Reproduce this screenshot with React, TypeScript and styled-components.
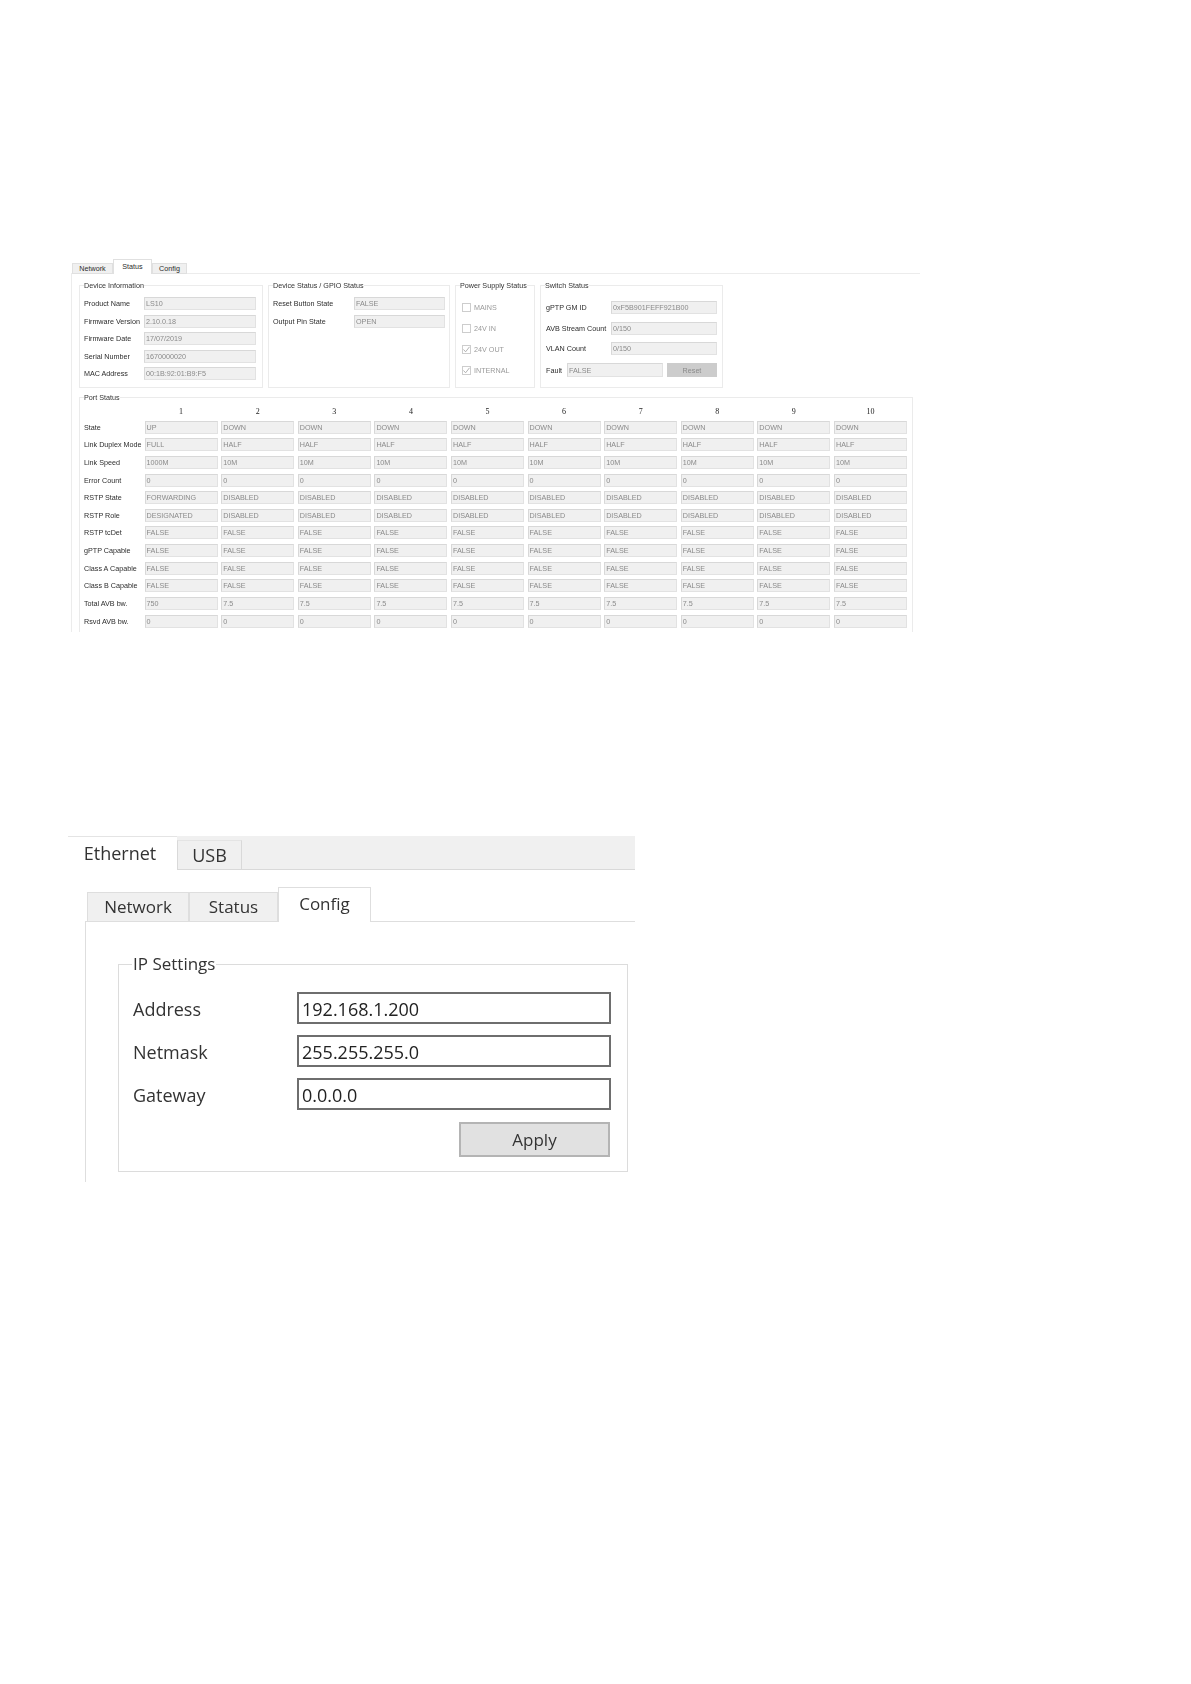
import styled, { createGlobalStyle } from "styled-components";

const GlobalStyle = createGlobalStyle`
  html, body {
    margin: 0;
    padding: 0;
    background: #ffffff;
  }
  #root {
    width: 1191px;
    height: 1684px;
    overflow: hidden;
  }
`;

const deviceInfo = [
  ["Product Name", "LS10"],
  ["Firmware Version", "2.10.0.18"],
  ["Firmware Date", "17/07/2019"],
  ["Serial Number", "1670000020"],
  ["MAC Address", "00:1B:92:01:B9:F5"],
];

const gpioStatus = [
  ["Reset Button State", "FALSE"],
  ["Output Pin State", "OPEN"],
];

const powerSupply = [
  { label: "MAINS", checked: false },
  { label: "24V IN", checked: false },
  { label: "24V OUT", checked: true },
  { label: "INTERNAL", checked: true },
];

const switchStatus = [
  ["gPTP GM ID", "0xF5B901FEFF921B00"],
  ["AVB Stream Count", "0/150"],
  ["VLAN Count", "0/150"],
];

const ports = [1, 2, 3, 4, 5, 6, 7, 8, 9, 10];

const portRows: { label: string; first: string; rest: string }[] = [
  { label: "State", first: "UP", rest: "DOWN" },
  { label: "Link Duplex Mode", first: "FULL", rest: "HALF" },
  { label: "Link Speed", first: "1000M", rest: "10M" },
  { label: "Error Count", first: "0", rest: "0" },
  { label: "RSTP State", first: "FORWARDING", rest: "DISABLED" },
  { label: "RSTP Role", first: "DESIGNATED", rest: "DISABLED" },
  { label: "RSTP tcDet", first: "FALSE", rest: "FALSE" },
  { label: "gPTP Capable", first: "FALSE", rest: "FALSE" },
  { label: "Class A Capable", first: "FALSE", rest: "FALSE" },
  { label: "Class B Capable", first: "FALSE", rest: "FALSE" },
  { label: "Total AVB bw.", first: "750", rest: "7.5" },
  { label: "Rsvd AVB bw.", first: "0", rest: "0" },
];

const ipSettings = [
  ["Address", "192.168.1.200"],
  ["Netmask", "255.255.255.0"],
  ["Gateway", "0.0.0.0"],
];

export default function App() {
  return (
    <Page>
      <GlobalStyle />
      <StatusWindow>
        <SmallTabs>
          <SmallTab $width={41}>Network</SmallTab>
          <SmallTab $width={39} $active>
            Status
          </SmallTab>
          <SmallTab $width={35}>Config</SmallTab>
        </SmallTabs>
        <StatusPane>
          <GroupRow>
            <SmallGroup $width={184}>
              <SmallLegend>Device Information</SmallLegend>
              <FieldGrid $label={60} $field={112}>
                {deviceInfo.map(([label, value]) => (
                  <FieldPair key={label} label={label} value={value} />
                ))}
              </FieldGrid>
            </SmallGroup>
            <SmallGroup $width={182}>
              <SmallLegend>Device Status / GPIO Status</SmallLegend>
              <FieldGrid $label={81} $field={91}>
                {gpioStatus.map(([label, value]) => (
                  <FieldPair key={label} label={label} value={value} />
                ))}
              </FieldGrid>
            </SmallGroup>
            <SmallGroup $width={80}>
              <SmallLegend>Power Supply Status</SmallLegend>
              <CheckList>
                {powerSupply.map((item) => (
                  <CheckRow key={item.label}>
                    <CheckBox>
                      {item.checked && (
                        <svg width="7" height="7" viewBox="0 0 7 7" fill="none">
                          <path d="M0.5 3.5 L2.6 5.8 L6.5 0.8" stroke="#a8a8a8" strokeWidth="0.9" />
                        </svg>
                      )}
                    </CheckBox>
                    <CheckLabel>{item.label}</CheckLabel>
                  </CheckRow>
                ))}
              </CheckList>
            </SmallGroup>
            <SmallGroup $width={183}>
              <SmallLegend>Switch Status</SmallLegend>
              <SwitchGrid>
                {switchStatus.map(([label, value]) => (
                  <FieldPair key={label} label={label} value={value} />
                ))}
              </SwitchGrid>
              <FaultRow>
                <SmallLabel>Fault</SmallLabel>
                <FaultField>FALSE</FaultField>
                <ResetButton>Reset</ResetButton>
              </FaultRow>
            </SmallGroup>
          </GroupRow>
          <PortGroup>
            <SmallLegend>Port Status</SmallLegend>
            <PortGrid>
              <span />
              {ports.map((port) => (
                <PortNumber key={port}>{port}</PortNumber>
              ))}
              {portRows.map((row) => (
                <PortRow key={row.label} label={row.label} first={row.first} rest={row.rest} />
              ))}
            </PortGrid>
          </PortGroup>
        </StatusPane>
      </StatusWindow>

      <ConfigWindow>
        <TopBar>
          <TopTab $active>Ethernet</TopTab>
          <TopTab>USB</TopTab>
        </TopBar>
        <ConfigBody>
          <LargeTabs>
            <LargeTab $width={102}>Network</LargeTab>
            <LargeTab $width={89}>Status</LargeTab>
            <LargeTab $width={93} $active>
              Config
            </LargeTab>
          </LargeTabs>
          <ConfigPane>
            <IpGroup>
              <IpLegend>IP Settings</IpLegend>
              <IpGrid>
                {ipSettings.map(([label, value]) => (
                  <IpPair key={label} label={label} value={value} />
                ))}
              </IpGrid>
              <ApplyRow>
                <ApplyButton>Apply</ApplyButton>
              </ApplyRow>
            </IpGroup>
          </ConfigPane>
        </ConfigBody>
      </ConfigWindow>
    </Page>
  );
}

const FieldPair = ({ label, value }: { label: string; value: string }) => (
  <>
    <SmallLabel>{label}</SmallLabel>
    <Field>{value}</Field>
  </>
);

const PortRow = ({ label, first, rest }: { label: string; first: string; rest: string }) => (
  <>
    <SmallLabel>{label}</SmallLabel>
    {ports.map((port) => (
      <Field key={port}>{port === 1 ? first : rest}</Field>
    ))}
  </>
);

const IpPair = ({ label, value }: { label: string; value: string }) => (
  <>
    <IpLabel>{label}</IpLabel>
    <IpField>{value}</IpField>
  </>
);

const Page = styled.div`
  display: flex;
  flex-direction: column;
  padding-top: 259px;
`;

const StatusWindow = styled.section`
  width: 849px;
  margin-left: 71px;
  font-family: "Liberation Sans", Arial, sans-serif;
  font-size: 7.2px;
  color: #2c2c2c;
  filter: blur(0.4px);
`;

const SmallTabs = styled.div`
  display: flex;
  align-items: flex-end;
  height: 14px;
  padding-left: 1px;
`;

const SmallTab = styled.div<{ $width: number; $active?: boolean }>`
  position: relative;
  z-index: 1;
  width: ${({ $width }) => $width}px;
  height: ${({ $active }) => ($active ? 15 : 11)}px;
  margin-bottom: -1px;
  padding-bottom: ${({ $active }) => ($active ? 2 : 1)}px;
  display: flex;
  align-items: center;
  justify-content: center;
  box-sizing: border-box;
  background: ${({ $active }) => ($active ? "#ffffff" : "#f0f0f0")};
  border: 1px solid #e0e0e0;
  border-bottom: ${({ $active }) => ($active ? "none" : "1px solid #e0e0e0")};
`;

const StatusPane = styled.div`
  height: 359px;
  box-sizing: border-box;
  overflow: hidden;
  border-top: 1px solid #ececec;
  border-left: 1px solid #ececec;
  padding: 6px 0 0 7px;
`;

const GroupRow = styled.div`
  display: flex;
  gap: 5px;
`;

const SmallGroup = styled.fieldset<{ $width: number }>`
  width: ${({ $width }) => $width}px;
  height: 108px;
  box-sizing: border-box;
  margin: 0;
  min-width: 0;
  padding: 0 4px;
  border: 1px solid #ebebeb;
`;

const SmallLegend = styled.legend`
  padding: 1px 0 0;
  line-height: 10px;
  white-space: nowrap;
  color: #333333;
`;

const FieldGrid = styled.div<{ $label: number; $field: number }>`
  display: grid;
  grid-template-columns: ${({ $label, $field }) => `${$label}px ${$field}px`};
  grid-auto-rows: 13px;
  row-gap: 4.5px;
  padding-top: 6px;
`;

const SmallLabel = styled.span`
  display: flex;
  align-items: center;
  white-space: nowrap;
  color: #2c2c2c;
`;

const Field = styled.div`
  display: flex;
  align-items: center;
  box-sizing: border-box;
  padding-left: 1px;
  overflow: hidden;
  white-space: nowrap;
  background: #f0f0f0;
  border: 1px solid #e2e2e2;
  border-top-color: #d8d8d8;
  border-left-color: #d8d8d8;
  color: #8a8a8a;
`;

const CheckList = styled.div`
  display: flex;
  flex-direction: column;
  gap: 12px;
  padding: 12px 0 0 2px;
`;

const CheckRow = styled.div`
  display: flex;
  align-items: center;
  gap: 3px;
  height: 9px;
`;

const CheckBox = styled.span`
  display: flex;
  align-items: center;
  justify-content: center;
  width: 9px;
  height: 9px;
  box-sizing: border-box;
  border: 1px solid #cdcdcd;
`;

const CheckLabel = styled.span`
  color: #9a9a9a;
`;

const SwitchGrid = styled.div`
  display: grid;
  grid-template-columns: 65px 106px;
  grid-auto-rows: 13px;
  row-gap: 7.7px;
  padding: 10px 0 0 1px;
`;

const FaultRow = styled.div`
  display: flex;
  align-items: stretch;
  height: 14px;
  margin-top: 8px;
  padding-left: 1px;
`;

const FaultField = styled(Field)`
  width: 96px;
  margin-left: 5px;
`;

const ResetButton = styled.div`
  width: 50px;
  margin-left: 4px;
  display: flex;
  align-items: center;
  justify-content: center;
  background: #cccccc;
  color: #8a8a8a;
`;

const PortGroup = styled.fieldset`
  width: 834px;
  box-sizing: border-box;
  margin: 4px 0 0;
  min-width: 0;
  padding: 0 4px 20px;
  border: 1px solid #ebebeb;
`;

const PortGrid = styled.div`
  display: grid;
  grid-template-columns: 57px repeat(10, 73px);
  grid-template-rows: 10px;
  grid-auto-rows: 13px;
  column-gap: 3.6px;
  row-gap: 4.65px;
  padding-top: 3px;
`;

const PortNumber = styled.span`
  display: flex;
  align-items: flex-end;
  justify-content: center;
  font-family: "Liberation Serif", "Times New Roman", serif;
  font-size: 8px;
  line-height: 9px;
  color: #222222;
`;

const ConfigWindow = styled.section`
  width: 567px;
  margin: 204px 0 0 68px;
  font-family: "Open Sans", "Noto Sans", sans-serif;
  color: #333333;
  filter: blur(0.4px);
`;

const TopBar = styled.div`
  display: flex;
  align-items: flex-end;
  height: 34px;
  box-sizing: border-box;
  background: #f0f0f0;
  border-bottom: 1px solid #d9d9d9;
`;

const TopTab = styled.div<{ $active?: boolean }>`
  width: ${({ $active }) => ($active ? 109 : 65)}px;
  height: ${({ $active }) => ($active ? 34 : 30)}px;
  margin-bottom: -1px;
  box-sizing: border-box;
  display: flex;
  align-items: center;
  justify-content: center;
  padding-bottom: ${({ $active }) => ($active ? 1 : 0)}px;
  padding-right: ${({ $active }) => ($active ? 5 : 0)}px;
  font-size: 18px;
  background: ${({ $active }) => ($active ? "#ffffff" : "#f0f0f0")};
  border: ${({ $active }) => ($active ? "none" : "1px solid #d9d9d9")};
  border-top: 1px solid #e4e4e4;
`;

const ConfigBody = styled.div`
  margin: 17px 0 0 17px;
`;

const LargeTabs = styled.div`
  display: flex;
  align-items: flex-end;
  height: 34px;
  padding-left: 2px;
`;

const LargeTab = styled.div<{ $width: number; $active?: boolean }>`
  position: relative;
  z-index: 1;
  width: ${({ $width }) => $width}px;
  height: ${({ $active }) => ($active ? 35 : 30)}px;
  margin-bottom: -1px;
  padding-bottom: ${({ $active }) => ($active ? 3 : 1)}px;
  box-sizing: border-box;
  display: flex;
  align-items: center;
  justify-content: center;
  font-size: 17px;
  background: ${({ $active }) => ($active ? "#ffffff" : "#f0f0f0")};
  border: 1px solid #dedede;
  border-bottom: ${({ $active }) => ($active ? "none" : "1px solid #dedede")};
`;

const ConfigPane = styled.div`
  height: 261px;
  box-sizing: border-box;
  border-top: 1px solid #dedede;
  border-left: 1px solid #dedede;
  padding: 32px 0 0 32px;
`;

const IpGroup = styled.fieldset`
  width: 510px;
  box-sizing: border-box;
  margin: 0;
  min-width: 0;
  padding: 18px 16px 14px 14px;
  border: 1px solid #dcdcdc;
`;

const IpLegend = styled.legend`
  padding: 0 1px;
  margin-left: -1px;
  font-size: 17px;
  line-height: 20px;
`;

const IpGrid = styled.div`
  display: grid;
  grid-template-columns: 164px 1fr;
  grid-auto-rows: 32px;
  row-gap: 11px;
`;

const IpLabel = styled.span`
  display: flex;
  align-items: center;
  padding-top: 2px;
  font-size: 18px;
`;

const IpField = styled.div`
  display: flex;
  align-items: center;
  box-sizing: border-box;
  padding: 1px 0 0 3px;
  font-size: 18px;
  color: #222222;
  background: #ffffff;
  border: 2px solid #6e6e6e;
`;

const ApplyRow = styled.div`
  display: flex;
  justify-content: flex-end;
  margin-top: 12px;
  padding-right: 1px;
`;

const ApplyButton = styled.div`
  width: 151px;
  height: 35px;
  box-sizing: border-box;
  display: flex;
  align-items: center;
  justify-content: center;
  font-size: 17px;
  background: #e1e1e1;
  border: 2px solid #b4b4b4;
`;
